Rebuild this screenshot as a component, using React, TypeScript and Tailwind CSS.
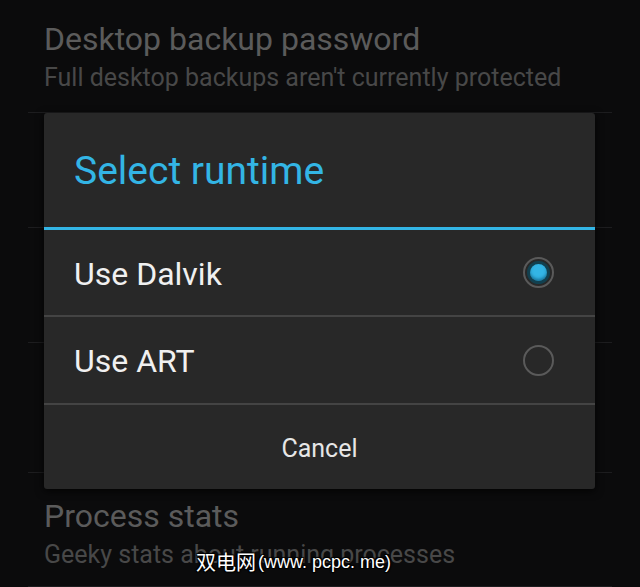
import React from 'react'

type Pref = { title?: string; summary?: string; h: string; pt: string }

const prefs: Pref[] = [
  { title: 'Desktop backup password', summary: "Full desktop backups aren't currently protected", h: 'h-[113px]', pt: 'pt-[23px]' },
  { h: 'h-[115px]', pt: '' },
  { h: 'h-[115px]', pt: '' },
  { h: 'h-[130px]', pt: '' },
  { title: 'Process stats', summary: 'Geeky stats about running processes', h: 'h-[114px]', pt: 'pt-[27px]' },
]

function Radio({ checked }: { checked?: boolean }) {
  return (
    <div className="w-[31px] h-[31px] rounded-full border-2 border-[#5a5a5a] flex items-center justify-center">
      {checked && (
        <div className="w-[23px] h-[23px] rounded-full bg-[#12404f] flex items-center justify-center">
          <div className="w-[17px] h-[17px] rounded-full bg-[#33b5e5] shadow-[inset_0_-2px_3px_rgba(0,60,90,0.5)]" />
        </div>
      )}
    </div>
  )
}

export default function App() {
  return (
    <div className="relative w-[640px] h-[587px] overflow-hidden bg-[#0b0b0c] font-['Roboto',sans-serif]">
      {/* settings list behind the dialog */}
      <div className="flex flex-col">
        {prefs.map((p, i) => (
          <div key={i} className={`${p.h} ${p.pt} mx-7 border-b border-[#1d1d1f] px-4 flex flex-col`}>
            {p.title && (
              <>
                <div className="text-[32px] leading-none text-[#5b5b5b] whitespace-nowrap">{p.title}</div>
                <div className="mt-[10px] text-[25px] leading-none text-[#484848] whitespace-nowrap">{p.summary}</div>
              </>
            )}
          </div>
        ))}
      </div>

      {/* dialog */}
      <div className="absolute left-[44px] top-[113px] w-[551px] h-[376px] rounded-[3px] bg-[#282828] shadow-[0_2px_8px_rgba(0,0,0,0.8)] flex flex-col">
        <div className="h-[114px] flex items-center px-[30px] pt-[2px] text-[39px] leading-none text-[#33b5e5]">
          Select runtime
        </div>
        <div className="h-[3px] bg-[#33b5e5]" />
        <div className="h-[85px] flex items-center justify-between pl-[30px] pr-[41px] text-[32px] leading-none text-[#f0f0f0]">
          <span className="pt-[2px]">Use Dalvik</span>
          <Radio checked />
        </div>
        <div className="h-[2px] bg-[#444444]" />
        <div className="h-[86px] flex items-center justify-between pl-[30px] pr-[41px] text-[32px] leading-none text-[#f0f0f0]">
          <span className="pt-[2px]">Use ART</span>
          <Radio />
        </div>
        <div className="h-[2px] bg-[#444444]" />
        <div className="flex-1 flex items-center justify-center pt-[2px] text-[25px] leading-none text-[#e6e6e6]">
          Cancel
        </div>
      </div>

      {/* watermark */}
      <div className="absolute left-[196px] top-[552px] flex items-center leading-none text-white [text-shadow:1px_1px_1px_#000,-1px_-1px_1px_#000,1px_-1px_1px_#000,-1px_1px_1px_#000]">
        <span className="text-[20px] font-['Noto_Sans_CJK_SC',sans-serif]">双电网</span>
        <span className="ml-[2px] text-[18px] font-['Liberation_Sans',sans-serif]">(www. pcpc. me)</span>
      </div>
    </div>
  )
}
